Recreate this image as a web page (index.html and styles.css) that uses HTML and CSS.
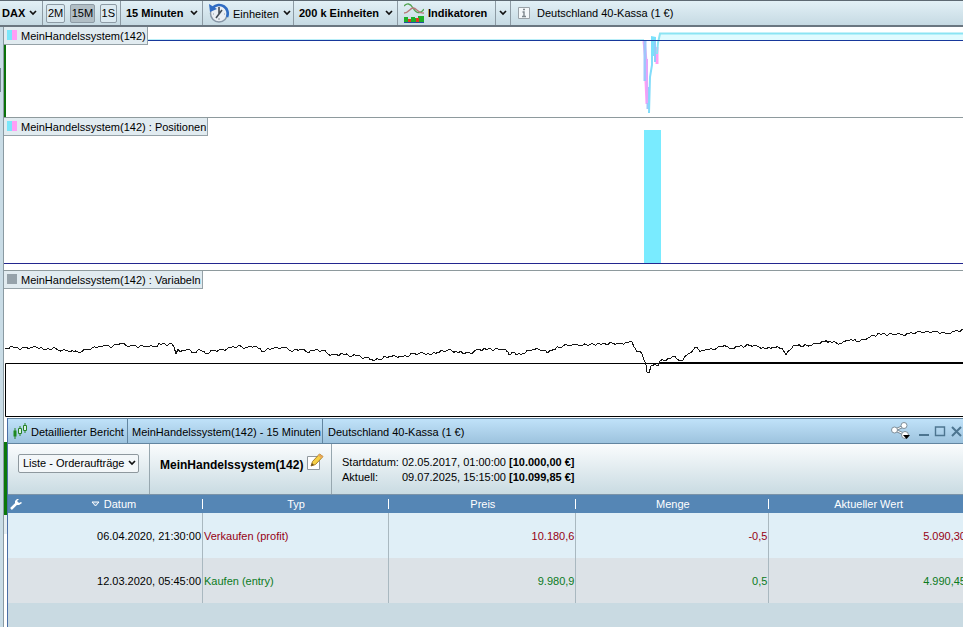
FILE: index.html
```html
<!DOCTYPE html>
<html lang="de">
<head>
<meta charset="utf-8">
<title>DAX</title>
<link rel="stylesheet" href="styles.css">
</head>
<body>
<svg class="defs" aria-hidden="true">
  <symbol id="chevron" viewBox="0 0 8 6"><path d="M1 1l3 3 3-3" fill="none" stroke="#111" stroke-width="1.7"/></symbol>
</svg>

<header class="toolbar">
  <button class="tool tool-symbol">DAX <svg class="chevron"><use href="#chevron"/></svg></button>
  <div class="tool tool-presets">
    <button class="preset">2M</button>
    <button class="preset active">15M</button>
    <button class="preset">1S</button>
  </div>
  <button class="tool tool-interval">15 Minuten <svg class="chevron"><use href="#chevron"/></svg></button>
  <button class="tool tool-unit">
    <svg class="clock" viewBox="0 0 20 20">
      <circle cx="10" cy="10.500" r="8.500" fill="#e9eef3" stroke="#8796a6" stroke-width="1.500"/>
      <path d="M4 4.500A8.600 8.600 0 0 1 18 14" fill="none" stroke="#2f6cc4" stroke-width="2.600"/>
      <path d="M0 1l1 8 7-3z" fill="#2f6cc4"/>
      <path d="M10 4v7l-3 4M10 11l3-4" fill="none" stroke="#444d57" stroke-width="1.600"/>
      <path d="M10 15v2M4 11h1M15 11h1" stroke="#8c96a0"/>
    </svg>
    <span>Einheiten</span> <svg class="chevron"><use href="#chevron"/></svg></button>
  <button class="tool tool-count">200 k Einheiten <svg class="chevron"><use href="#chevron"/></svg></button>
  <button class="tool tool-indicators">
    <svg class="indicator" viewBox="0 0 20 20">
      <path d="M0 3C3 0 6 0 9 5s7 7 11 1" fill="none" stroke="#52a452" stroke-width="1.300"/>
      <path d="M0 10c5 0 6-5 9-5 4 0 5 6 11 5" fill="none" stroke="#b77a7a" stroke-width="1.300"/>
      <path d="M0 14h4v2h3v-2h4v1h3v-2h6v6H0z" fill="#1faf2a"/>
      <path d="M4 16h3v3H4zM12 15h3v4h-3z" fill="#e03a24"/>
      <path d="M0 19.500h20" stroke="#2450a0"/>
    </svg>
    Indikatoren</button>
  <button class="tool tool-more" aria-label="Mehr"><svg class="chevron"><use href="#chevron"/></svg></button>
  <div class="tool-info">
    <svg class="info" viewBox="0 0 12 12"><path d="M.5.5h11v11H.5z" fill="#f4f8fa" stroke="#9aa2a8"/><path d="M5 2.500h2M4.500 5H6v4M4 9.500h4" fill="none" stroke="#7d868c" stroke-width="1.400"/></svg>
    <span>Deutschland 40-Kassa (1 €)</span>
  </div>
</header>

<main class="workspace">
  <div class="gutter"><i></i></div>
  <div class="content">
    <section class="panel equity">
      <svg class="plot" viewBox="0 0 959 90" preserveAspectRatio="none">
        <path d="M0 90V17" stroke="#0b720b" stroke-width="4"/>
        <path d="M0 12.500H640" stroke="#b9eef8"/>
        <path d="M655 6H959V13H655z" fill="#e0fbff"/>
        <path d="M640 14l2 20v20M642 54l1 23M653 20v17" fill="none" stroke="#ff9df4" stroke-width="3"/>
        <path d="M641 14v40M644 60v22" stroke="#9fc6fb" stroke-width="3"/>
        <path d="M643 32v44" stroke="#e5a5fa" stroke-width="2"/>
        <path d="M645 86L646 50L648 38V11" fill="none" stroke="#82dcfa" stroke-width="2"/>
        <path d="M647 9l5 1v25h-2v-6h-3z" fill="#7be1fb"/>
        <path d="M651 15v20" stroke="#92cdf9" stroke-width="2"/>
        <path d="M653 27l1-11 2-9.500H959" fill="none" stroke="#8be4f3" stroke-width="2"/>
        <path d="M0 13.500H959" stroke="#17389b"/>
      </svg>
      <div class="legend"><i class="swatch duo"></i>MeinHandelssystem(142)</div>
    </section>
    <section class="panel positions">
      <svg class="plot" viewBox="0 0 959 152" preserveAspectRatio="none">
        <path d="M640 12h17v133h-17z" fill="#79ebff"/>
        <path d="M0 145.500H959" stroke="#23278f"/>
      </svg>
      <div class="legend"><i class="swatch duo"></i>MeinHandelssystem(142) : Positionen</div>
    </section>
    <section class="panel variables">
      <svg class="plot" viewBox="0 0 959 147" preserveAspectRatio="none">
        <path d="M959 92.500H1.500V145.500H959" fill="none" stroke="#000"/>
        <path d="M656 92H959" stroke="#000" stroke-width="2"/>
        <polyline id="series" fill="none" stroke="#151515"/>
      </svg>
      <div class="legend"><i class="swatch grey"></i>MeinHandelssystem(142) : Variabeln</div>
    </section>

    <div class="lower">
      <div class="edge"></div>
      <section class="report">
        <header class="titlebar">
          <div class="title first">
            <svg class="candles" viewBox="0 0 14 16"><path d="M2 5v11M7 3v10M12 0v10" stroke="#268326"/><path d="M.5 7.500h3v6h-3z" fill="#1f8a1f"/><path d="M5.500 5.500h3v5h-3zM10.500 2.500h3v5h-3z" fill="#d8f0e0" stroke="#268326"/></svg>
            Detaillierter Bericht</div>
          <div class="title second">MeinHandelssystem(142) - 15 Minuten</div>
          <div class="title last">Deutschland 40-Kassa (1 €)</div>
          <div class="window-tools">
            <button aria-label="Teilen"><svg class="share" viewBox="0 0 20 18"><path d="M13 4L4 8l11 5" fill="none" stroke="#7f8e99" stroke-width="3"/><path d="M13 4L4 8l11 5" fill="none" stroke="#fff"/><g fill="#fff" stroke="#7f8e99"><circle cx="13" cy="3.500" r="3"/><circle cx="3.500" cy="8" r="3"/><circle cx="14" cy="13" r="3.500"/></g><path d="M12 13h7l-3.500 4z" fill="#000"/></svg></button>
            <button aria-label="Minimieren"><svg class="win" viewBox="0 0 12 12"><path d="M1 10h10" stroke="#4d7590" stroke-width="2"/></svg></button>
            <button aria-label="Maximieren"><svg class="win" viewBox="0 0 12 12"><path d="M1.500 2h9v8.500h-9zM1 2h10" fill="none" stroke="#4d7590" stroke-width="1.400"/></svg></button>
            <button aria-label="Schließen"><svg class="win" viewBox="0 0 12 12"><path d="M2 2l9 9M11 2l-9 9" stroke="#4d7590" stroke-width="2"/></svg></button>
          </div>
        </header>
        <div class="summary">
          <div class="view">
            <div class="picker">
              <select aria-label="Ansicht"><option>Liste - Orderaufträge</option></select>
              <svg class="chevron"><use href="#chevron"/></svg>
            </div>
          </div>
          <div class="system">
            <strong>MeinHandelssystem(142)</strong>
            <button aria-label="Bearbeiten"><svg class="edit" viewBox="0 0 17 17"><path d="M.5 3.500h12v13H.5z" fill="#fff" stroke="#91989e"/><path d="M4 13l1.500-4.500L12.500 1l3.500 2.500-7.500 8z" fill="#f6cf45" stroke="#a7802c"/><path d="M12.500 1L16 3.500l-1.500 1.800-3.500-2.800z" fill="#e9a65a"/><path d="M4 13l1-3 2 2z" fill="#6c4d21"/></svg></button>
          </div>
          <dl class="dates">
            <dt>Startdatum:</dt><dd>02.05.2017, 01:00:00 <b>[10.000,00 €]</b></dd>
            <dt>Aktuell:</dt><dd>09.07.2025, 15:15:00 <b>[10.099,85 €]</b></dd>
          </dl>
        </div>
        <table class="orders">
          <colgroup><col class="c-date"><col class="c-type"><col class="c-price"><col class="c-qty"><col></colgroup>
          <thead>
            <tr>
              <th><div class="date-head"><svg class="wrench" viewBox="0 0 12 12"><path d="M1 11l5-5" stroke="#fff" stroke-width="2.500"/><path d="M7 1L5 3v3l1 1h3l3-2-1-1-2 1-2-2 2-2z" fill="#fff"/></svg><span><svg class="sort" viewBox="0 0 9 7"><path d="M1 1h7L4.500 5z" fill="#7ba2c8" stroke="#fff"/></svg>Datum</span></div></th>
              <th>Typ</th><th>Preis</th><th>Menge</th><th>Aktueller Wert</th>
            </tr>
          </thead>
          <tbody>
            <tr class="sell"><td>06.04.2020, 21:30:00</td><td>Verkaufen (profit)</td><td>10.180,6</td><td>-0,5</td><td>5.090,30</td></tr>
            <tr class="buy"><td>12.03.2020, 05:45:00</td><td>Kaufen (entry)</td><td>9.980,9</td><td>0,5</td><td>4.990,45</td></tr>
          </tbody>
        </table>
      </section>
    </div>
  </div>
</main>
<script src="chart.js"></script>
</body>
</html>
```
FILE: styles.css
```css
* { box-sizing: border-box; }
body {
  margin: 0;
  min-height: 100vh;
  display: flex;
  flex-direction: column;
  overflow: hidden;
  background: #c9dae2;
  color: #000;
  font: 11px/15px "Liberation Sans", Arial, sans-serif;
}
button, select { font: inherit; color: inherit; }
button { border: 0; padding: 0; background: none; white-space: nowrap; }
svg { display: block; flex: none; }
.defs { position: absolute; width: 0; height: 0; }
.chevron { width: 8px; height: 6px; }

.toolbar {
  display: flex;
  height: 27px;
  border-top: 1px solid #5d6972;
  border-bottom: 2px solid #6a7680;
  background: linear-gradient(#e2f0f6, #c6dae3);
}
.tool {
  display: flex;
  align-items: center;
  gap: 4px;
  padding: 0 4px;
  border-right: 1px solid #8c9aa3;
  font-weight: bold;
}
.tool > .chevron { margin-left: auto; }
.tool-symbol { padding: 0 6px 0 2px; width: 43px; }
.tool-presets { width: 78px; padding: 0 3px; justify-content: space-between; }
.preset {
  height: 19px;
  padding: 0 1px;
  border: 1px solid #8d9ba5;
  border-radius: 2px;
  background: #dceaf1;
  font-weight: normal;
}
.preset.active { background: #b1bec5; }
.tool-interval { width: 82px; padding-left: 5px; }
.tool-unit { width: 91px; font-weight: normal; }
.tool-unit span { padding-top: 2px; }
.tool-count { width: 104px; padding-left: 5px; }
.tool-indicators { width: 98px; padding-left: 6px; }
.tool-more { width: 15px; padding: 0 3px; }
.tool-info { display: flex; align-items: center; gap: 7px; padding-left: 7px; }
.clock { width: 20px; height: 20px; margin-left: 2px; }
.indicator { width: 20px; height: 20px; }
.info { width: 12px; height: 12px; }

.workspace { flex: 1; display: flex; background: #c9dae2; }
.gutter { width: 4px; border-right: 1px solid #8a9aa2; background: #c9dce6; }
.gutter i { display: block; width: 1px; height: 24px; margin-top: 41px; background: #758691; }
.content { flex: 1; min-width: 0; display: flex; flex-direction: column; }

.panel { position: relative; background: #fff; }
.equity { height: 91px; border-bottom: 1px solid #8e9a9d; }
.positions { height: 153px; border-bottom: 1px solid #8e9a9d; }
.variables { height: 147px; }
.plot { width: 100%; height: 100%; }
#series { shape-rendering: crispEdges; }
.legend {
  position: absolute;
  top: 0;
  left: 0;
  display: flex;
  align-items: center;
  gap: 4px;
  height: 18px;
  padding: 1px 1px 0 3px;
  border: 1px solid #96a2a8;
  border-width: 0 1px 1px 0;
  background: #e1ebf0;
}
.swatch { width: 10px; height: 10px; margin-bottom: 2px; }
.duo { background: linear-gradient(90deg, #79e6fa 50%, #ff9df6 50%); }
.grey { background: #96a2aa; }

.lower { flex: 1; display: flex; }
.edge {
  width: 3px;
  background: linear-gradient(#fff 24px, #0b780b 24px, #0b780b 97px, #e4edf2 97px, #e4edf2 116px, #fff 116px);
}
.report {
  flex: 1;
  min-width: 0;
  overflow: hidden;
  border-left: 1px solid #4b6fa6;
  background: #c9dae2;
}
.titlebar {
  display: flex;
  height: 26px;
  border: 1px solid #6285a0;
  border-width: 1px 0;
  background: linear-gradient(#c0e2f9, #9dc3de);
}
.title { display: flex; align-items: center; padding: 2px 0 0 5px; border-right: 1px solid #6285a0; white-space: nowrap; }
.title.first { gap: 4px; width: 120px; }
.title.second { width: 195px; padding-left: 4px; }
.title.last { border: 0; }
.candles { width: 14px; height: 16px; margin-bottom: 2px; }
.window-tools { margin-left: auto; display: flex; align-items: center; gap: 4px; padding-right: 1px; }
.window-tools button:first-child { margin-right: 3px; }
.share { width: 20px; height: 18px; }
.win { width: 12px; height: 12px; }
.summary {
  display: flex;
  height: 50px;
  background: linear-gradient(#fafcfd, #c9dbe2);
}
.view { width: 142px; padding: 10px; border-right: 1px solid #97a7af; }
.picker { position: relative; width: 121px; }
.picker select {
  display: block;
  width: 100%;
  height: 19px;
  padding: 0 4px;
  appearance: none;
  border: 1px solid #8e989e;
  border-radius: 2px;
  background: #f3f7f9;
}
.picker .chevron { position: absolute; right: 3px; top: 6px; }
.system { display: flex; justify-content: space-between; width: 182px; padding: 9px 7px 0 10px; border-right: 1px solid #97a7af; }
.system strong { padding-top: 5px; font-size: 12px; }
.edit { width: 17px; height: 17px; }
.system button { align-self: flex-start; }
.dates { margin: 0; padding: 11px 10px; display: grid; grid-template-columns: 60px auto; align-content: start; white-space: nowrap; }
.dates dd { margin: 0; }

.orders { width: calc(100% + 5px); table-layout: fixed; border-collapse: separate; border-spacing: 0; }
.c-date { width: 195px; }
.c-type { width: 19.4%; }
.c-price { width: 19.5%; }
.c-qty { width: 20.1%; }
.orders th {
  height: 19px;
  padding: 0;
  font-weight: normal;
  color: #fff;
  border-top: 1px solid #7a93a8;
  background: linear-gradient(#fff, #fff) right center / 1px 10px no-repeat #5586b5;
}
.orders th:last-child { background: #5586b5; }
.date-head { display: flex; align-items: center; padding-left: 2px; }
.date-head span { flex: 1; display: flex; align-items: center; justify-content: center; gap: 4px; padding-left: 2px; }
.wrench { width: 12px; height: 12px; }
.sort { width: 9px; height: 7px; }
.orders td { height: 45px; padding: 2px 1px 0; text-align: right; border-right: 1px solid #a9b8c0; }
.orders td:nth-child(2) { text-align: left; }
.sell { background: #e0eff7; color: #960014; }
.buy { background: #dce2e7; color: #0b7a1c; }
.orders td:first-child { color: #000; }
```
FILE: chart.js
```js
// Turning points of the series; small alternating noise is added between them.
const points = [
  [1,78],[6,76],[11,77],[21,77],[29,76],[38,77],[40,79],[49,77],[54,79],[64,80],[74,81],[84,78],[94,76],[96,75],
  [109,75],[116,72],[123,75],[143,75],[151,76],[156,73],[168,73],[170,76],[172,83],[174,78],[176,81],[179,79],
  [185,78],[188,82],[196,79],[201,82],[209,80],[223,78],[234,75],[241,77],[250,75],[259,80],[268,77],[283,77],
  [289,80],[296,78],[303,81],[311,79],[319,79],[324,83],[331,84],[339,83],[348,85],[355,84],[359,88],[364,86],
  [369,90],[374,88],[386,85],[399,86],[409,83],[420,82],[426,84],[433,81],[444,79],[453,81],[466,82],[474,79],
  [484,78],[499,78],[504,81],[505,84],[508,81],[513,84],[519,82],[529,78],[539,79],[544,82],[549,78],[563,74],
  [576,74],[598,73],[609,72],[616,73],[628,71],[631,77],[634,81],[636,80],[639,86],[642,94],[643,101],[645,102],
  [647,95],[650,93],[654,95],[656,90],[666,88],[669,85],[673,88],[679,89],[683,84],[693,76],[696,81],[698,79],
  [703,79],[713,77],[720,74],[726,78],[733,76],[746,74],[753,75],[761,78],[769,76],[778,77],[782,84],[789,75],
  [808,74],[814,72],[826,70],[837,73],[843,69],[856,70],[866,66],[876,63],[893,63],[899,64],[913,61],[938,61],
  [942,63],[948,61],[959,59]
];
const noise = [0, 1, -1, 0, -1, 1, 1, -1, 0, 1, 0, -1];
const coords = [];
let step = 0;
for (let i = 0; i < points.length - 1; i++) {
  const [x0, y0] = points[i];
  const [x1, y1] = points[i + 1];
  coords.push(x0 + "," + y0);
  for (let x = x0 + 2; x < x1; x += 2) {
    const y = y0 + (y1 - y0) * (x - x0) / (x1 - x0) + noise[step++ % noise.length];
    coords.push(x + "," + y.toFixed(1));
  }
}
coords.push(points[points.length - 1].join(","));
document.getElementById("series").setAttribute("points", coords.join(" "));
```
